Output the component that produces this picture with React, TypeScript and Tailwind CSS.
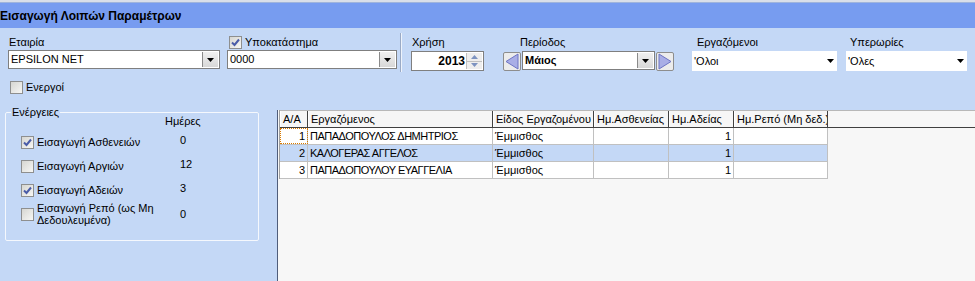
import React from 'react'

const font = "font-['Liberation_Sans',Arial,sans-serif]"

function Check({ checked }: { checked?: boolean }) {
  return (
    <span className="relative inline-flex w-[13px] h-[13px] shrink-0 items-center justify-center border border-[#8e8f8f] bg-gradient-to-br from-[#d6d6d2] to-[#f7f7f5]">
      {checked && (
        <svg width="9" height="9" viewBox="0 0 9 9">
          <path d="M1 4.5 L3.5 7 L8 1.5" fill="none" stroke="#4a5ca8" strokeWidth="2" />
        </svg>
      )}
    </span>
  )
}

function DownTri() {
  return (
    <svg width="7" height="4" viewBox="0 0 7 4">
      <polygon points="0,0 7,0 3.5,4" fill="#000" />
    </svg>
  )
}

function Combo({ value, bold }: { value: string; bold?: boolean }) {
  return (
    <div className="flex h-[19px] border border-[#7f7f7f] bg-white">
      <div className={`flex-1 px-[2px] text-[11px] leading-[17px] ${bold ? 'font-bold' : ''}`}>{value}</div>
      <div className="my-[1px] mr-[1px] w-[16px] flex items-center justify-center border-l border-[#8a8a8a] bg-gradient-to-b from-[#f0f0f0] to-[#d8d8d8]">
        <DownTri />
      </div>
    </div>
  )
}

function FlatCombo({ value }: { value: string }) {
  return (
    <div className="flex h-[20px] items-center bg-white pl-[2px] pr-[3px]">
      <div className="flex-1 text-[11px]">{value}</div>
      <DownTri />
    </div>
  )
}

function Arrow({ dir }: { dir: 'left' | 'right' }) {
  return (
    <div className="w-[18px] h-[19px] mt-[1px] flex items-center justify-center rounded-[2px] border border-[#8d8d8d] bg-[#ececec]">
      <svg width="14" height="17" viewBox="0 0 14 17">
        {dir === 'left' ? (
          <polygon points="13,1 13,16 1,8.5" fill="#a9aee6" stroke="#6d74c4" strokeWidth="1" />
        ) : (
          <polygon points="1,1 1,16 13,8.5" fill="#a9aee6" stroke="#6d74c4" strokeWidth="1" />
        )}
      </svg>
    </div>
  )
}

const cols = [
  { w: 'w-[28px]', h: 'A/A', align: 'text-right' },
  { w: 'w-[185px]', h: 'Εργαζόμενος', align: 'text-left tracking-[-0.5px]' },
  { w: 'w-[101px]', h: 'Είδος Εργαζομένου', align: 'text-left' },
  { w: 'w-[75px]', h: 'Ημ.Ασθενείας', align: 'text-left' },
  { w: 'w-[65px]', h: 'Ημ.Αδείας', align: 'text-right' },
  { w: 'w-[94px]', h: 'Ημ.Ρεπό (Μη δεδ.)', align: 'text-left' },
]

const rows = [
  ['1', 'ΠΑΠΑΔΟΠΟΥΛΟΣ ΔΗΜΗΤΡΙΟΣ', 'Έμμισθος', '', '1', ''],
  ['2', 'ΚΑΛΟΓΕΡΑΣ ΑΓΓΕΛΟΣ', 'Έμμισθος', '', '1', ''],
  ['3', 'ΠΑΠΑΔΟΠΟΥΛΟΥ ΕΥΑΓΓΕΛΙΑ', 'Έμμισθος', '', '1', ''],
]

const actions = [
  { label: 'Εισαγωγή Ασθενειών', days: '0', checked: true },
  { label: 'Εισαγωγή Αργιών', days: '12', checked: false },
  { label: 'Εισαγωγή Αδειών', days: '3', checked: true },
]

export default function App() {
  return (
    <div className={`${font} w-[975px] h-[281px] overflow-hidden bg-[#c4d8f6] text-black flex flex-col`}>
      <div className="h-[2px] bg-[#d9dfe9]" />
      <div className="h-[1px] bg-[#9fb4dc]" />
      <div className="h-[25px] bg-[#779cf0] flex items-center text-[12px] font-bold leading-none">
        Εισαγωγή Λοιπών Παραμέτρων
      </div>

      {/* top controls */}
      <div className="flex items-start pt-[7px] text-[11px]">
        <div className="ml-[8px] w-[212px]">
          <div className="h-[15px] leading-[14px] pl-[1px]">Εταιρία</div>
          <Combo value="EPSILON NET" />
        </div>
        <div className="ml-[7px] w-[170px]">
          <div className="h-[15px] flex items-center gap-[3px] pl-[2px]">
            <Check checked />
            <span>Υποκατάστημα</span>
          </div>
          <Combo value="0000" />
        </div>
        <div className="ml-[3px] -mt-[2px] h-[39px] w-[2px] border-l border-[#9aaac6] border-r border-r-[#eef3fb]" />
        <div className="ml-[9px] w-[73px]">
          <div className="h-[16px] leading-[14px] pl-[1px]">Χρήση</div>
          <div className="flex h-[20px] border border-[#7f7f7f] bg-white">
            <div className="flex-1 text-right pr-[1px] font-bold text-[12px] leading-[18px]">2013</div>
            <div className="w-[16px] my-[1px] mr-[1px] flex flex-col bg-[#eeeeee] border-l border-[#c0c0c0]">
              <div className="flex-1 flex items-center justify-center border-b border-[#c0c0c0]">
                <svg width="7" height="4" viewBox="0 0 7 4"><polygon points="3.5,0 7,4 0,4" fill="#7d93c0" /></svg>
              </div>
              <div className="flex-1 flex items-center justify-center">
                <svg width="7" height="4" viewBox="0 0 7 4"><polygon points="0,0 7,0 3.5,4" fill="#7d93c0" /></svg>
              </div>
            </div>
          </div>
        </div>
        <div className="ml-[19px] w-[171px]">
          <div className="h-[16px] leading-[14px] pl-[17px]">Περίοδος</div>
          <div className="flex items-start gap-[1px]">
            <Arrow dir="left" />
            <div className="w-[133px]"><Combo value="Μάιος" bold /></div>
            <Arrow dir="right" />
          </div>
        </div>
        <div className="ml-[18px] w-[145px]">
          <div className="h-[16px] leading-[14px] pl-[5px]">Εργαζόμενοι</div>
          <FlatCombo value="'Ολοι" />
        </div>
        <div className="ml-[9px] w-[121px]">
          <div className="h-[16px] leading-[14px] pl-[4px]">Υπερωρίες</div>
          <FlatCombo value="'Ολες" />
        </div>
      </div>

      <div className="flex items-center gap-[3px] ml-[10px] mt-[9px] h-[13px] text-[11px]">
        <Check />
        <span>Ενεργοί</span>
      </div>

      {/* bottom */}
      <div className="flex flex-1 mt-[7px] text-[11px]">
        <div className="w-[277px] shrink-0">
          <div className="relative mt-[11px] ml-[5px] w-[254px] h-[129px] rounded-[2px] border border-[#f5f8fd]">
            <span className="absolute -top-[8px] left-[5px] bg-[#c4d8f6] px-[1px] leading-[14px]">Ενέργειες</span>
            <div className="h-[17px] pl-[159px] pt-[1px] leading-[14px]">Ημέρες</div>
            {actions.map((a) => (
              <div key={a.label} className="h-[24px] flex items-center">
                <div className="w-[174px] pl-[15px] flex items-center gap-[3px]">
                  <Check checked={a.checked} />
                  <span>{a.label}</span>
                </div>
                <span className="-mt-[3px]">{a.days}</span>
              </div>
            ))}
            <div className="h-[24px] flex items-center">
              <div className="w-[174px] pl-[15px] flex items-center gap-[3px]">
                <Check />
                <span className="leading-[12px]">
                  Εισαγωγή Ρεπό (ως Μη
                  <br />
                  Δεδουλευμένα)
                </span>
              </div>
              <span>0</span>
            </div>
          </div>
        </div>

        <div className="flex-1 mt-[9px] bg-[#f7f7f7] border-l border-[#4f5d7a] pl-[1px]">
          <div className="border-l border-[#a0a0a0]">
            <div className="flex h-[18px] border-t border-[#b8b8b8] border-b border-b-[#404040]">
              {cols.map((c) => (
                <div key={c.h} className={`${c.w} shrink-0 border-r border-[#404040] border-l border-l-white px-[2px] leading-[16px] whitespace-nowrap overflow-hidden bg-[#f6f6f6]`}>
                  {c.h}
                </div>
              ))}
            </div>
            {rows.map((r, ri) => (
              <div key={ri} className={`flex h-[17px] ${ri === 1 ? 'bg-[#c4d8f6]' : 'bg-white'} w-[548px] border-b border-[#c0c0c0]`}>
                {r.map((v, ci) => (
                  <div
                    key={ci}
                    className={`${cols[ci].w} shrink-0 border-r border-[#c0c0c0] px-[2px] leading-[16px] whitespace-nowrap overflow-hidden ${cols[ci].align} ${ri === 0 && ci === 0 ? 'outline outline-1 outline-dotted outline-[#d97a00] -outline-offset-1 bg-white' : ''}`}
                  >
                    {v}
                  </div>
                ))}
              </div>
            ))}
          </div>
        </div>
      </div>
    </div>
  )
}
